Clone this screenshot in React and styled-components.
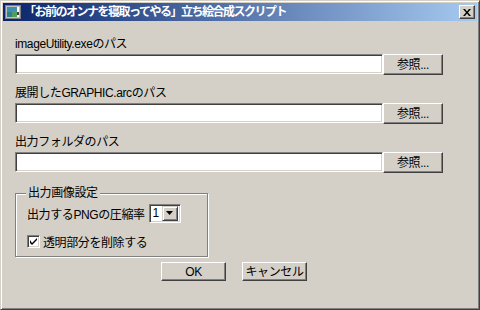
import React from "react";
import styled, { createGlobalStyle } from "styled-components";

const Global = createGlobalStyle`
  html, body { margin: 0; padding: 0; background: #d4d0c8; }
  body { font-family: "Liberation Sans", "Noto Sans CJK JP", sans-serif; font-size: 12px; color: #000; }
  * { box-sizing: border-box; }
`;

const Window = styled.div`
  width: 480px;
  height: 310px;
  background: #d4d0c8;
  border: 1px solid;
  border-color: #d4d0c8 #404040 #404040 #d4d0c8;
  box-shadow: inset 1px 1px #fff, inset -1px -1px #808080;
  padding: 2px;
  display: flex;
  flex-direction: column;
`;

const TitleBar = styled.div`
  height: 18px;
  display: flex;
  align-items: center;
  padding: 0 2px;
  background: linear-gradient(to right, #0a246a 0%, #a6caf0 100%);
`;

const TitleText = styled.div`
  flex: 1;
  margin-left: 3px;
  color: #fff;
  font-weight: bold;
  font-size: 12px;
  letter-spacing: -1.5px;
  line-height: 18px;
  white-space: nowrap;
`;

const CloseBtn = styled.div`
  width: 16px;
  height: 14px;
  background: #d4d0c8;
  border: 1px solid;
  border-color: #fff #404040 #404040 #fff;
  box-shadow: inset -1px -1px #808080;
  display: flex;
  align-items: center;
  justify-content: center;
`;

const Body = styled.div`
  flex: 1;
  display: flex;
  flex-direction: column;
  padding: 15px 0 0 12px;
  letter-spacing: -0.4px;
`;

const Section = styled.div`
  display: flex;
  flex-direction: column;
  gap: 2px;
  margin-bottom: ${(p) => p.$mb ?? 10}px;
`;

const Label = styled.div`
  height: 16px;
  line-height: 16px;
  white-space: nowrap;
`;

const Row = styled.div`
  display: flex;
  align-items: flex-start;
`;

const TextField = styled.div`
  width: 368px;
  height: 20px;
  background: #fff;
  border: 1px solid;
  border-color: #808080 #fff #fff #808080;
  box-shadow: inset 1px 1px #404040, inset -1px -1px #d4d0c8;
`;

const PushButton = styled.div`
  width: ${(p) => p.$w}px;
  height: ${(p) => p.$h}px;
  background: #d4d0c8;
  border: 1px solid;
  border-color: #fff #404040 #404040 #fff;
  box-shadow: inset -1px -1px #808080;
  display: flex;
  align-items: center;
  justify-content: center;
  line-height: 1;
  white-space: nowrap;
`;

const Group = styled.div`
  position: relative;
  width: 193px;
  height: 64px;
  margin-top: 20px;
  border: 1px solid #808080;
  box-shadow: inset 1px 1px #fff, 1px 1px #fff;
  padding: 10px 0 0 11px;
  display: flex;
  flex-direction: column;
  gap: 10px;
`;

const Legend = styled.div`
  position: absolute;
  top: -9px;
  left: 10px;
  padding: 0 2px;
  background: #d4d0c8;
  line-height: 16px;
`;

const GroupRow = styled.div`
  display: flex;
  align-items: center;
  gap: ${(p) => p.$gap}px;
  white-space: nowrap;
`;

const Combo = styled.div`
  width: 32px;
  height: 19px;
  background: #fff;
  border: 1px solid;
  border-color: #808080 #fff #fff #808080;
  box-shadow: inset 1px 1px #404040, inset -1px -1px #d4d0c8;
  padding: 1px 2px 2px 3px;
  display: flex;
  align-items: center;
  justify-content: space-between;
`;

const ComboValue = styled.span`
  line-height: 15px;
`;

const ComboArrow = styled.div`
  width: 16px;
  height: 15px;
  background: #d4d0c8;
  border: 1px solid;
  border-color: #d4d0c8 #404040 #404040 #d4d0c8;
  box-shadow: inset 1px 1px #fff, inset -1px -1px #808080;
  display: flex;
  align-items: center;
  justify-content: center;
`;

const Check = styled.div`
  width: 13px;
  height: 13px;
  background: #fff;
  border: 1px solid;
  border-color: #808080 #fff #fff #808080;
  box-shadow: inset 1px 1px #404040, inset -1px -1px #d4d0c8;
  display: flex;
  align-items: center;
  justify-content: center;
`;

const Footer = styled.div`
  display: flex;
  gap: 16px;
  margin-top: 5px;
  padding-left: 146px;
`;

const AppIcon = () => (
  <svg width="16" height="14" viewBox="0 0 16 14">
    <rect x="0" y="0" width="16" height="14" fill="#c0c0c0" />
    <rect x="0.5" y="0.5" width="15" height="13" fill="none" stroke="#808080" />
    <rect x="2" y="2" width="10" height="10" fill="#2f7f8f" />
    <rect x="2" y="2" width="10" height="5" fill="#3f8fb0" />
    <rect x="7" y="6" width="5" height="6" fill="#4fa060" />
    <rect x="12" y="2" width="2" height="10" fill="#fff" />
    <rect x="12" y="7" width="2" height="3" fill="#404040" />
  </svg>
);

const CloseGlyph = () => (
  <svg width="8" height="7" viewBox="0 0 8 7">
    <path d="M0 0h2l2 2.5L6 0h2L5 3.5 8 7H6L4 4.5 2 7H0l3-3.5z" fill="#000" />
  </svg>
);

const DownArrow = () => (
  <svg width="7" height="4" viewBox="0 0 7 4">
    <path d="M0 0h7L3.5 4z" fill="#000" />
  </svg>
);

const Tick = () => (
  <svg width="7" height="7" viewBox="0 0 7 7">
    <path d="M0 2v3l2 2 5-5V0L2 5z" fill="#000" />
  </svg>
);

const PathField = ({ label, mb }) => (
  <Section $mb={mb}>
    <Label>{label}</Label>
    <Row>
      <TextField />
      <PushButton $w={60} $h={21}>参照...</PushButton>
    </Row>
  </Section>
);

export default function App() {
  return (
    <>
      <Global />
      <Window>
        <TitleBar>
          <AppIcon />
          <TitleText>「お前のオンナを寝取ってやる」立ち絵合成スクリプト</TitleText>
          <CloseBtn>
            <CloseGlyph />
          </CloseBtn>
        </TitleBar>
        <Body>
          <PathField label="imageUtility.exeのパス" />
          <PathField label="展開したGRAPHIC.arcのパス" />
          <PathField label="出力フォルダのパス" mb={0} />
          <Group>
            <Legend>出力画像設定</Legend>
            <GroupRow $gap={4}>
              出力するPNGの圧縮率
              <Combo>
                <ComboValue>1</ComboValue>
                <ComboArrow>
                  <DownArrow />
                </ComboArrow>
              </Combo>
            </GroupRow>
            <GroupRow $gap={3}>
              <Check>
                <Tick />
              </Check>
              透明部分を削除する
            </GroupRow>
          </Group>
          <Footer>
            <PushButton $w={65} $h={19}>OK</PushButton>
            <PushButton $w={65} $h={19}>キャンセル</PushButton>
          </Footer>
        </Body>
      </Window>
    </>
  );
}
